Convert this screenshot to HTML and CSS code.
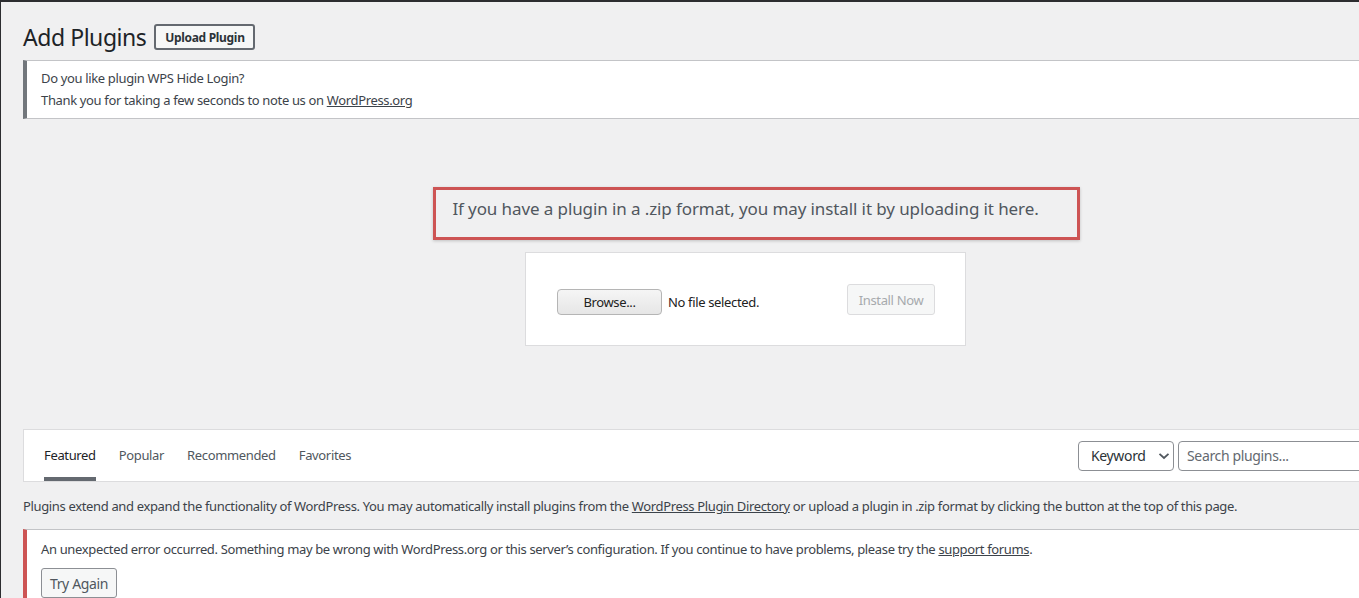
FILE: index.html
```html
<!DOCTYPE html>
<html lang="en">
<head>
<meta charset="utf-8">
<title>Add Plugins</title>
<link rel="stylesheet" href="styles.css">
</head>
<body>
<div class="frame">
  <div class="wrap">
    <div class="head">
      <h1 class="title">Add Plugins</h1>
      <a class="upload-btn">Upload Plugin</a>
    </div>

    <div class="notice">
      <p>Do you like plugin WPS Hide Login?</p>
      <p>Thank you for taking a few seconds to note us on <a class="link">WordPress.org</a></p>
    </div>

    <div class="upload">
      <div class="hint">If you have a plugin in a .zip format, you may install it by uploading it here.</div>
      <div class="upload-box">
        <div class="file">
          <span class="browse">Browse...</span>
          <span class="nofile">No file selected.</span>
        </div>
        <span class="install">Install Now</span>
      </div>
    </div>

    <div class="filter">
      <ul class="tabs">
        <li class="tab current">Featured</li>
        <li class="tab">Popular</li>
        <li class="tab">Recommended</li>
        <li class="tab">Favorites</li>
      </ul>
      <div class="search">
        <div class="select">Keyword
          <svg class="chev" width="12" height="8" viewBox="0 0 12 8"><path d="M1.5 1.8 L6 6 L10.5 1.8" fill="none" stroke="#50575e" stroke-width="1.8"/></svg>
        </div>
        <div class="input">Search plugins...</div>
      </div>
    </div>

    <p class="desc">Plugins extend and expand the functionality of WordPress. You may automatically install plugins from the <a class="link">WordPress Plugin Directory</a> or upload a plugin in .zip format by clicking the button at the top of this page.</p>

    <div class="error">
      <p>An unexpected error occurred. Something may be wrong with WordPress.org or this server’s configuration. If you continue to have problems, please try the <a class="link">support forums</a>.</p>
      <span class="retry">Try Again</span>
    </div>
  </div>
</div>
</body>
</html>
```

FILE: styles.css
```css
* { box-sizing: border-box; }
html, body { margin: 0; padding: 0; }
body {
  font-family: "Noto Sans", "Open Sans", sans-serif;
  color: #3c434a;
  font-size: 13px;
  letter-spacing: -0.35px;
}
.frame {
  width: 1359px;
  height: 598px;
  overflow: hidden;
  background: #f0f0f1;
  border-top: 2px solid #2c2d30;
  border-left: 1px solid #2c2d30;
}
.wrap {
  width: 1467px;
  padding-left: 22px;
}
.head {
  display: flex;
  align-items: center;
  gap: 8px;
  margin-top: 22px;
  height: 26px;
}
.title {
  margin: 0;
  font-size: 23px;
  font-weight: 400;
  line-height: 26px;
  color: #1d2327;
  letter-spacing: -0.45px;
}
.upload-btn {
  display: inline-flex;
  align-items: center;
  justify-content: center;
  width: 101px;
  height: 26px;
  border: 2px solid #646970;
  border-radius: 3px;
  background: #f6f7f7;
  font-size: 12px;
  font-weight: 700;
  color: #2c3338;
  letter-spacing: -0.3px;
}
.notice {
  margin-top: 10px;
  background: #fff;
  border: 1px solid #c3c4c7;
  border-left: 4px solid #72777c;
  border-right: 0;
  padding: 6px 14px 7px;
}
.notice p, .error p { margin: 0; line-height: 22px; }
.link { color: #3c434a; text-decoration: underline; }

.upload {
  display: flex;
  flex-direction: column;
  align-items: center;
  margin-top: 68px;
}
.hint {
  border: 3px solid #cd5454;
  box-shadow: 0 1px 3px rgba(0,0,0,0.2);
  padding: 7px 38px 16px 16px;
  font-size: 17px;
  line-height: 24px;
  color: #50575e;
  letter-spacing: -0.1px;
  margin-left: 22px;
}
.upload-box {
  margin-top: 12px;
  width: 441px;
  height: 94px;
  background: #fff;
  border: 1px solid #dcdcde;
  display: flex;
  align-items: flex-end;
  justify-content: space-between;
  padding: 0 30px 30px 31px;
}
.file { display: flex; align-items: center; gap: 6px; }
.browse {
  display: inline-flex;
  align-items: center;
  justify-content: center;
  width: 105px;
  height: 26px;
  border: 1px solid #b5b5b5;
  border-radius: 4px;
  background: linear-gradient(#f5f5f5, #e6e6e6);
  color: #222;
}
.nofile { color: #222; }
.install {
  display: inline-flex;
  align-items: center;
  justify-content: center;
  width: 88px;
  height: 31px;
  border: 1px solid #dcdcde;
  border-radius: 3px;
  background: #f6f7f7;
  color: #a7aaad;
}

.filter {
  margin-top: 83px;
  height: 53px;
  background: #fff;
  border: 1px solid #dcdcde;
  border-right: 0;
  display: flex;
  align-items: stretch;
  padding: 0 10px 0 20px;
}
.tabs {
  list-style: none;
  margin: 0;
  padding: 0;
  display: flex;
  gap: 23px;
}
.tab {
  display: flex;
  align-items: center;
  color: #50575e;
  border-bottom: 4px solid transparent;
  padding-top: 2px;
}
.tab.current { color: #1d2327; border-bottom-color: #646970; }
.search {
  margin-left: auto;
  display: flex;
  align-items: center;
  gap: 4px;
}
.select {
  width: 96px;
  height: 30px;
  border: 1px solid #8c8f94;
  border-radius: 4px;
  display: flex;
  align-items: center;
  padding-left: 12px;
  gap: 12px;
  font-size: 14px;
  color: #2c3338;
}
.input {
  width: 280px;
  height: 30px;
  border: 1px solid #8c8f94;
  border-radius: 4px;
  display: flex;
  align-items: center;
  padding-left: 8px;
  font-size: 14px;
  color: #646970;
}
.desc {
  margin: 14px 0 0;
  line-height: 20px;
}
.error {
  margin-top: 13px;
  background: #fff;
  border-top: 1px solid #c3c4c7;
  border-left: 4px solid #cd5454;
  padding: 8px 14px 20px;
}
.retry {
  display: inline-flex;
  align-items: center;
  justify-content: center;
  margin-top: 8px;
  width: 76px;
  height: 30px;
  border: 1px solid #8c8f94;
  border-radius: 3px;
  background: #f6f7f7;
  font-size: 14px;
  color: #50575e;
}
```
